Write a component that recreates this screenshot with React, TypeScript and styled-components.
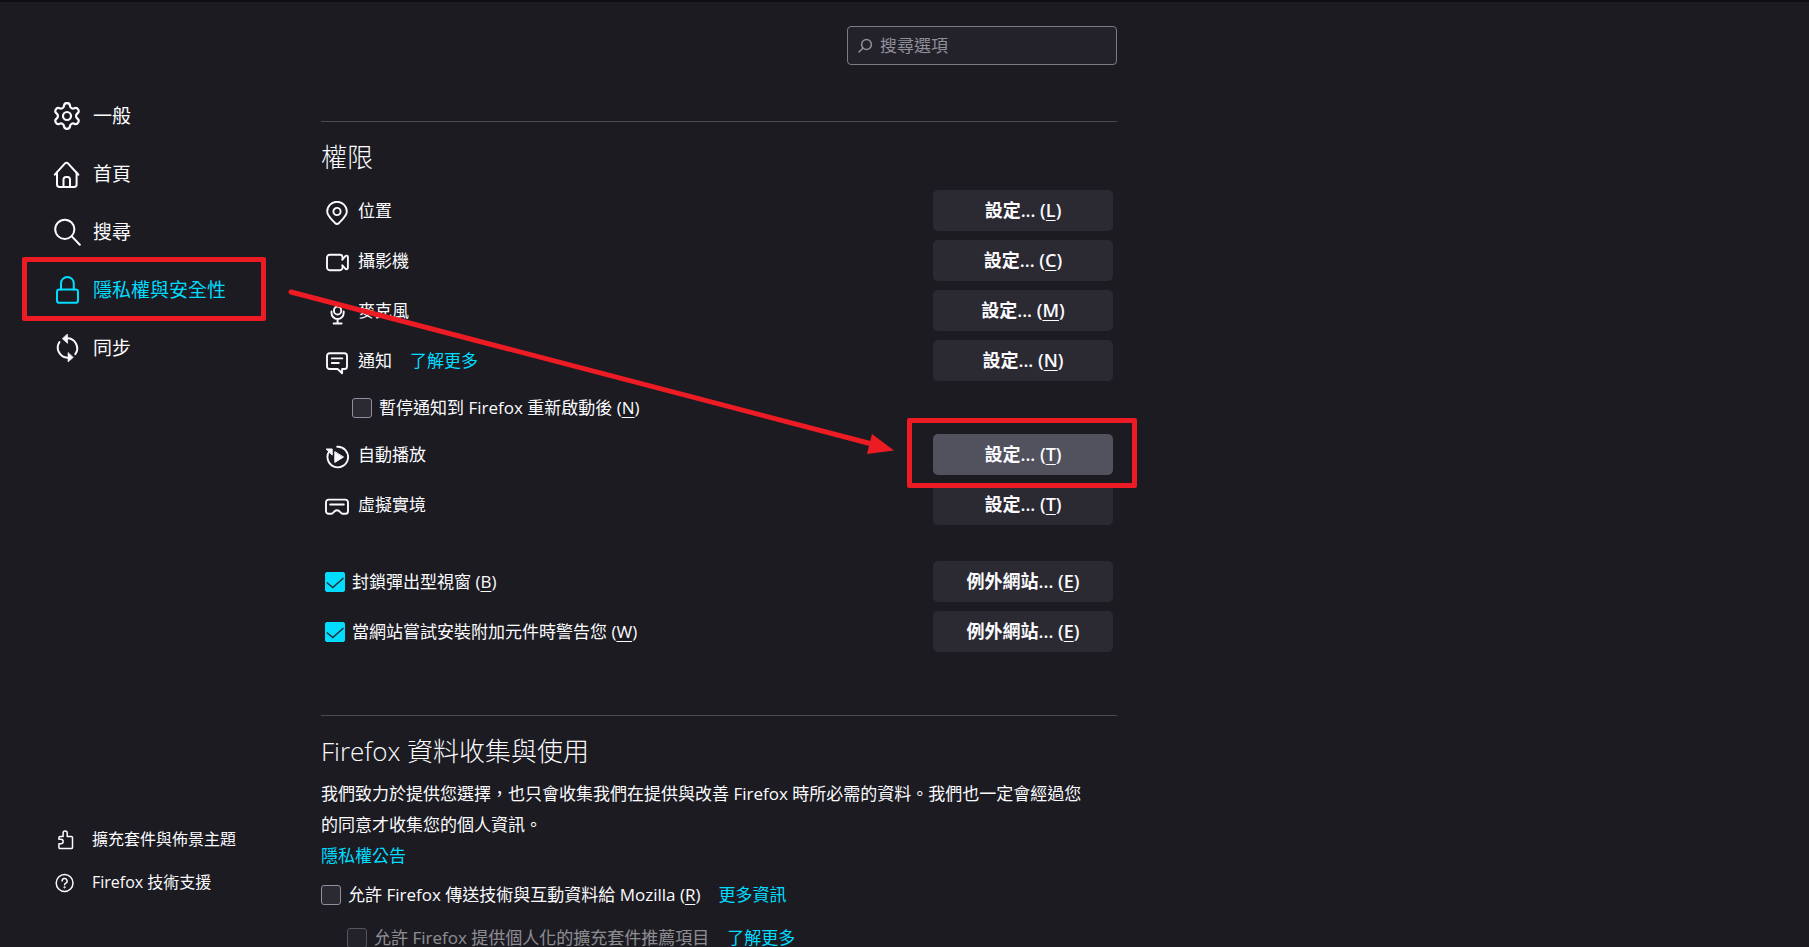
import React from "react";
import styled, { createGlobalStyle, css } from "styled-components";

const color = {
  page: "#1c1b22",
  field: "#23222b",
  button: "#2b2a33",
  buttonHover: "#52525e",
  text: "#fbfbfe",
  muted: "#8f8f98",
  line: "#4a494f",
  border: "#7c7b82",
  accent: "#00ddff",
  mark: "#ed1c24",
};

const GlobalStyle = createGlobalStyle`
  *, *::before, *::after { box-sizing: border-box; }
  body {
    margin: 0;
    background: ${color.page};
    color: ${color.text};
    font-family: "Open Sans", "Noto Sans CJK TC", sans-serif;
    font-size: 17px;
    line-height: 31px;
  }
  u { text-underline-offset: 3px; text-decoration-thickness: 1px; }
`;

const Page = styled.div`
  position: relative;
  display: flex;
  height: 100vh;
  overflow: hidden;
  border-top: 2px solid #0e0d11;
`;

const Sidebar = styled.aside`
  flex: 0 0 321px;
  display: flex;
  flex-direction: column;
  justify-content: space-between;
  padding: 85px 0 43px;
`;

const NavList = styled.ul`
  list-style: none;
  margin: 0;
  padding: 0;
`;

const markFrame = css`
  content: "";
  position: absolute;
  border: 5px solid ${color.mark};
  border-radius: 2px;
  pointer-events: none;
`;

const NavLink = styled.a<{ $active?: boolean }>`
  position: relative;
  display: flex;
  align-items: center;
  gap: 12px;
  height: 58px;
  padding-left: 53px;
  font-size: 19px;
  color: ${(p) => (p.$active ? color.accent : color.text)};
  text-decoration: none;
  ${(p) =>
    p.$active &&
    css`
      &::after {
        ${markFrame}
        inset: -4px 55px -2px 22px;
      }
    `}
`;

const FooterLink = styled.a`
  display: flex;
  align-items: center;
  gap: 17px;
  height: 43px;
  padding-left: 55px;
  font-size: 16px;
  color: ${color.text};
  text-decoration: none;
`;

const Main = styled.main`
  flex: 0 1 796px;
  min-width: 0;
  padding-top: 24px;
`;

const SearchBar = styled.label`
  display: flex;
  align-items: center;
  gap: 7px;
  width: 270px;
  height: 39px;
  margin: 0 0 56px auto;
  padding: 0 10px;
  border: 1px solid ${color.border};
  border-radius: 4px;
  background: ${color.field};
  color: ${color.muted};
`;

const SearchInput = styled.input`
  flex: 1;
  min-width: 0;
  padding: 0;
  border: 0;
  outline: 0;
  background: none;
  color: ${color.text};
  font: inherit;
  &::placeholder {
    color: ${color.muted};
    opacity: 1;
  }
`;

const Section = styled.section`
  border-top: 1px solid ${color.line};
  padding-top: 17px;
`;

const Title = styled.h2<{ $gap: number }>`
  margin: 0 0 ${(p) => p.$gap}px;
  font-size: 26px;
  font-weight: 300;
  line-height: 36px;
`;

const Rows = styled.div<{ $after: number }>`
  display: flex;
  flex-direction: column;
  gap: 9px;
  padding: 0 4px;
  margin-bottom: ${(p) => p.$after}px;
`;

const Row = styled.div`
  display: flex;
  align-items: center;
  justify-content: space-between;
  height: 41px;
`;

const RowLabel = styled.div`
  display: flex;
  align-items: center;
  gap: 9px;
`;

const SubRow = styled.div`
  display: flex;
  align-items: center;
  height: 35px;
  padding-left: 27px;
`;

const SettingsButton = styled.button<{ $hovered?: boolean }>`
  position: relative;
  width: 180px;
  height: 41px;
  padding: 0;
  border: 0;
  border-radius: 5px;
  background: ${(p) => (p.$hovered ? color.buttonHover : color.button)};
  color: ${color.text};
  font: inherit;
  font-size: 18px;
  font-weight: 600;
  ${(p) =>
    p.$hovered &&
    css`
      z-index: 1;
      &::after {
        ${markFrame}
        inset: -16px -24px -13px -26px;
      }
    `}
`;

const Link = styled.a`
  color: ${color.accent};
  text-decoration: none;
`;

const InlineLink = styled(Link)`
  margin-left: 18px;
`;

const CheckLabel = styled.label<{ $disabled?: boolean }>`
  display: flex;
  align-items: center;
  gap: 7px;
  opacity: ${(p) => (p.$disabled ? 0.5 : 1)};
`;

const CheckCell = styled.span`
  display: grid;
  place-items: center;
  width: 20px;
  height: 20px;
  > * {
    grid-area: 1 / 1;
  }
`;

const CheckInput = styled.input`
  appearance: none;
  width: 20px;
  height: 20px;
  margin: 0;
  border: 1px solid #8f8f9d;
  border-radius: 3px;
  background: ${color.button};
  &:checked {
    border-color: ${color.accent};
    border-radius: 2px;
    background: ${color.accent};
  }
`;

const Tick = styled.svg`
  width: 20px;
  height: 20px;
  fill: none;
  stroke: ${color.button};
  stroke-width: 1.4;
  pointer-events: none;
`;

const Paragraph = styled.p`
  margin: 0;
`;

const OptionList = styled.div`
  display: flex;
  flex-direction: column;
  gap: 12px;
  margin-top: 8px;
`;

const Option = styled.div<{ $nested?: boolean }>`
  display: flex;
  padding-left: ${(p) => (p.$nested ? 26 : 0)}px;
`;

const Arrow = styled.svg`
  position: absolute;
  top: 280px;
  left: 280px;
  z-index: 2;
  pointer-events: none;
`;

const Glyph = styled.svg`
  flex: none;
  fill: none;
  stroke: currentColor;
  stroke-linecap: round;
  stroke-linejoin: round;
`;

const RowGlyph = styled(Glyph).attrs({
  width: 24,
  height: 24,
  viewBox: "0 0 24 24",
  strokeWidth: 1.9,
})`
  margin-top: 4px;
`;

const NavGlyph = styled(Glyph).attrs({
  width: 28,
  height: 28,
  viewBox: "0 0 28 28",
  strokeWidth: 2,
})``;

const FooterGlyph = styled(Glyph).attrs({
  width: 20,
  height: 20,
  viewBox: "0 0 20 20",
  strokeWidth: 1.5,
})``;

const GearIcon = () => (
  <Glyph width="28" height="28" viewBox="1.2 1.2 21.6 21.6" strokeWidth="1.7">
    <path d="M9.671 4.136a2.34 2.34 0 0 1 4.659 0 2.34 2.34 0 0 0 3.319 1.915 2.34 2.34 0 0 1 2.33 4.033 2.34 2.34 0 0 0 0 3.831 2.34 2.34 0 0 1-2.33 4.033 2.34 2.34 0 0 0-3.319 1.915 2.34 2.34 0 0 1-4.659 0 2.34 2.34 0 0 0-3.32-1.915 2.34 2.34 0 0 1-2.33-4.033 2.34 2.34 0 0 0 0-3.831A2.34 2.34 0 0 1 6.35 6.051a2.34 2.34 0 0 0 3.319-1.915" />
    <circle cx="12" cy="12" r="3.1" />
  </Glyph>
);

const HomeIcon = () => (
  <NavGlyph>
    <path d="M1.8 14.7 12 3.4a2 2 0 0 1 3 0l10.4 11.3" />
    <path d="M4 12.5v12a2.4 2.4 0 0 0 2.4 2.4h14.8a2.4 2.4 0 0 0 2.4-2.4v-12" />
    <path d="M10.5 26.5v-7a2.5 2.5 0 0 1 2.5-2.5h1.5a2.5 2.5 0 0 1 2.5 2.5v7" />
  </NavGlyph>
);

const SearchIcon = () => (
  <NavGlyph>
    <circle cx="11.8" cy="11.3" r="9.6" />
    <path d="m18.8 18.4 8 8.3" />
  </NavGlyph>
);

const LockIcon = () => (
  <NavGlyph>
    <rect x="4" y="13.6" width="21" height="13.2" rx="2.4" />
    <path d="M8 13.6V7.4a6.4 6.4 0 0 1 12.8 0v6.2" />
  </NavGlyph>
);

const SyncIcon = () => (
  <NavGlyph>
    <path d="M13.5 4.4a10 10 0 0 1 8.8 15.800M15.5 23.6a10 10 0 0 1-9-15.600" />
    <path
      d="M14.6 0v9.4L9.4 4.8zM15 18.8v9.2l5.2-4.6z"
      fill="currentColor"
      strokeWidth="0.6"
    />
  </NavGlyph>
);

const AddonIcon = () => (
  <FooterGlyph>
    <path d="M3.9 9.3V7.8a1.2 1.2 0 0 1 1.2-1.2h3V3a2 2 0 0 1 4.1 0v3.6h4.1a1.2 1.2 0 0 1 1.2 1.2v9.6a1.2 1.2 0 0 1-1.2 1.2H5.1a1.2 1.2 0 0 1-1.2-1.2v-3.6h2a2.2 2.2 0 0 0 0-4.5z" />
  </FooterGlyph>
);

const HelpIcon = () => (
  <FooterGlyph>
    <circle cx="9.6" cy="10" r="8.4" />
    <path d="M7.1 8a2.5 2.5 0 1 1 3.7 2.2c-.8.4-1.2.8-1.2 1.6" />
    <circle cx="9.6" cy="14.3" r="0.4" fill="currentColor" />
  </FooterGlyph>
);

const LocationIcon = () => (
  <RowGlyph>
    <path d="M12 23c-.8 0-1.4-.4-2-1C6.8 18.6 2.2 15 2.2 10.6a9.8 9.8 0 0 1 19.6 0c0 4.4-4.6 8-7.8 11.4-.6.6-1.2 1-2 1z" />
    <circle cx="12" cy="10.5" r="3.6" />
  </RowGlyph>
);

const CameraIcon = () => (
  <RowGlyph>
    <path d="M17.6 8.2V6.4A2.6 2.6 0 0 0 15 3.8H4.6A2.6 2.6 0 0 0 2 6.4v10.2a2.6 2.6 0 0 0 2.6 2.6H15a2.6 2.6 0 0 0 2.6-2.6v-1.8" />
    <path d="m17.3 8.7 3-3.5c1-1.1 2.6-.6 2.6.9v10.6c0 1.5-1.6 2-2.6.9l-3-3.3" />
  </RowGlyph>
);

const MicIcon = () => (
  <RowGlyph>
    <rect x="9" y="5.5" width="7.2" height="8" rx="3.6" />
    <path d="M6.5 10.5v1.400a6.1 6.1 0 0 0 12.2 0v-1.400M12.6 18v4.500M8.6 22.500h8" />
  </RowGlyph>
);

const MessageIcon = () => (
  <RowGlyph>
    <path d="M4.6 2.2h14.8A2.6 2.6 0 0 1 22 4.8v10.6a2.6 2.6 0 0 1-2.6 2.6h-2.3v4.2L12.6 18h-8A2.6 2.6 0 0 1 2 15.4V4.8a2.6 2.6 0 0 1 2.6-2.6z" />
    <path d="M6.8 7.4h10.5M6.8 12h7" />
  </RowGlyph>
);

const AutoplayIcon = () => (
  <RowGlyph>
    <path d="M12.2 1.7a10.300 10.300 0 1 1-8 4.600" />
    <path d="M1.5 4h5.700v5.700zM9.8 7v10.400l8.400-5.200z" fill="currentColor" strokeWidth="1" />
  </RowGlyph>
);

const HeadsetIcon = () => (
  <RowGlyph>
    <path d="M3.6 4.6h16.8A2.6 2.6 0 0 1 23 7.2v9a2.6 2.6 0 0 1-2.6 2.6h-3c-1.6 0-2.5-3.5-5.4-3.5s-3.8 3.5-5.4 3.5h-3A2.6 2.6 0 0 1 1 16.2v-9a2.6 2.6 0 0 1 2.6-2.6z" />
    <path d="M5.2 9.5h13.6" />
  </RowGlyph>
);

const Key = ({ k }: { k: string }) => (
  <>
    (<u>{k}</u>)
  </>
);

type CheckProps = {
  checked?: boolean;
  disabled?: boolean;
  children: React.ReactNode;
};

const Check = ({ checked, disabled, children }: CheckProps) => (
  <CheckLabel $disabled={disabled}>
    <CheckCell>
      <CheckInput type="checkbox" defaultChecked={checked} disabled={disabled} />
      {checked && (
        <Tick viewBox="0 0 20 20">
          <path d="m1.8 10.5 6 5L18.5 6" />
        </Tick>
      )}
    </CheckCell>
    <span>{children}</span>
  </CheckLabel>
);

const navItems = [
  { label: "一般", Icon: GearIcon },
  { label: "首頁", Icon: HomeIcon },
  { label: "搜尋", Icon: SearchIcon },
  { label: "隱私權與安全性", Icon: LockIcon, active: true },
  { label: "同步", Icon: SyncIcon },
];

type PermissionProps = {
  id: string;
  label: string;
  Icon: React.ComponentType;
  accessKey: string;
  hovered?: boolean;
  link?: string;
};

const Permission = ({ id, label, Icon, accessKey, hovered, link }: PermissionProps) => (
  <Row>
    <RowLabel>
      <Icon />
      <span>
        <span id={id}>{label}</span>
        {link && <InlineLink href="#learn">{link}</InlineLink>}
      </span>
    </RowLabel>
    <SettingsButton type="button" aria-describedby={id} $hovered={hovered}>
      設定... <Key k={accessKey} />
    </SettingsButton>
  </Row>
);

export default function App() {
  return (
    <>
      <GlobalStyle />
      <Page lang="zh-Hant-TW">
        <Sidebar>
          <nav>
            <NavList>
              {navItems.map(({ label, Icon, active }) => (
                <li key={label}>
                  <NavLink href="#category" $active={active}>
                    <Icon />
                    {label}
                  </NavLink>
                </li>
              ))}
            </NavList>
          </nav>
          <div>
            <FooterLink href="#addons">
              <AddonIcon />
              擴充套件與佈景主題
            </FooterLink>
            <FooterLink href="#support">
              <HelpIcon />
              Firefox 技術支援
            </FooterLink>
          </div>
        </Sidebar>

        <Main>
          <SearchBar>
            <Glyph width="15" height="15" viewBox="0 0 15 15" strokeWidth="1.5">
              <circle cx="8.5" cy="6.5" r="4.9" />
              <path d="M4.8 10.2 1 14" />
            </Glyph>
            <SearchInput type="text" placeholder="搜尋選項" aria-label="搜尋選項" />
          </SearchBar>

          <Section>
            <Title $gap={15}>權限</Title>
            <Rows $after={36}>
              <Permission id="location" label="位置" Icon={LocationIcon} accessKey="L" />
              <Permission id="camera" label="攝影機" Icon={CameraIcon} accessKey="C" />
              <Permission id="microphone" label="麥克風" Icon={MicIcon} accessKey="M" />
              <Permission
                id="notification"
                label="通知"
                Icon={MessageIcon}
                accessKey="N"
                link="了解更多"
              />
              <SubRow>
                <Check>
                  暫停通知到 Firefox 重新啟動後 <Key k="N" />
                </Check>
              </SubRow>
              <Permission id="autoplay" label="自動播放" Icon={AutoplayIcon} accessKey="T" hovered />
              <Permission id="xr" label="虛擬實境" Icon={HeadsetIcon} accessKey="T" />
            </Rows>
            <Rows $after={63}>
              <Row>
                <Check checked>
                  封鎖彈出型視窗 <Key k="B" />
                </Check>
                <SettingsButton type="button">
                  例外網站... <Key k="E" />
                </SettingsButton>
              </Row>
              <Row>
                <Check checked>
                  當網站嘗試安裝附加元件時警告您 <Key k="W" />
                </Check>
                <SettingsButton type="button">
                  例外網站... <Key k="E" />
                </SettingsButton>
              </Row>
            </Rows>
          </Section>

          <Section>
            <Title $gap={9}>Firefox 資料收集與使用</Title>
            <Paragraph>
              我們致力於提供您選擇，也只會收集我們在提供與改善 Firefox 時所必需的資料。我們也一定會經過您
              <br />
              的同意才收集您的個人資訊。
            </Paragraph>
            <Paragraph>
              <Link href="#privacy">隱私權公告</Link>
            </Paragraph>
            <OptionList>
              <Option>
                <Check>
                  允許 Firefox 傳送技術與互動資料給 Mozilla <Key k="R" />
                </Check>
                <InlineLink href="#telemetry">更多資訊</InlineLink>
              </Option>
              <Option $nested>
                <Check disabled>允許 Firefox 提供個人化的擴充套件推薦項目</Check>
                <InlineLink href="#recommendations">了解更多</InlineLink>
              </Option>
            </OptionList>
          </Section>
        </Main>

        <Arrow width="620" height="180" viewBox="0 0 620 180" aria-hidden="true">
          <path d="M11 10 592 162" stroke={color.mark} strokeWidth="5" strokeLinecap="round" />
          <path d="M614 168.5 587 172l5-20z" fill={color.mark} />
        </Arrow>
      </Page>
    </>
  );
}
